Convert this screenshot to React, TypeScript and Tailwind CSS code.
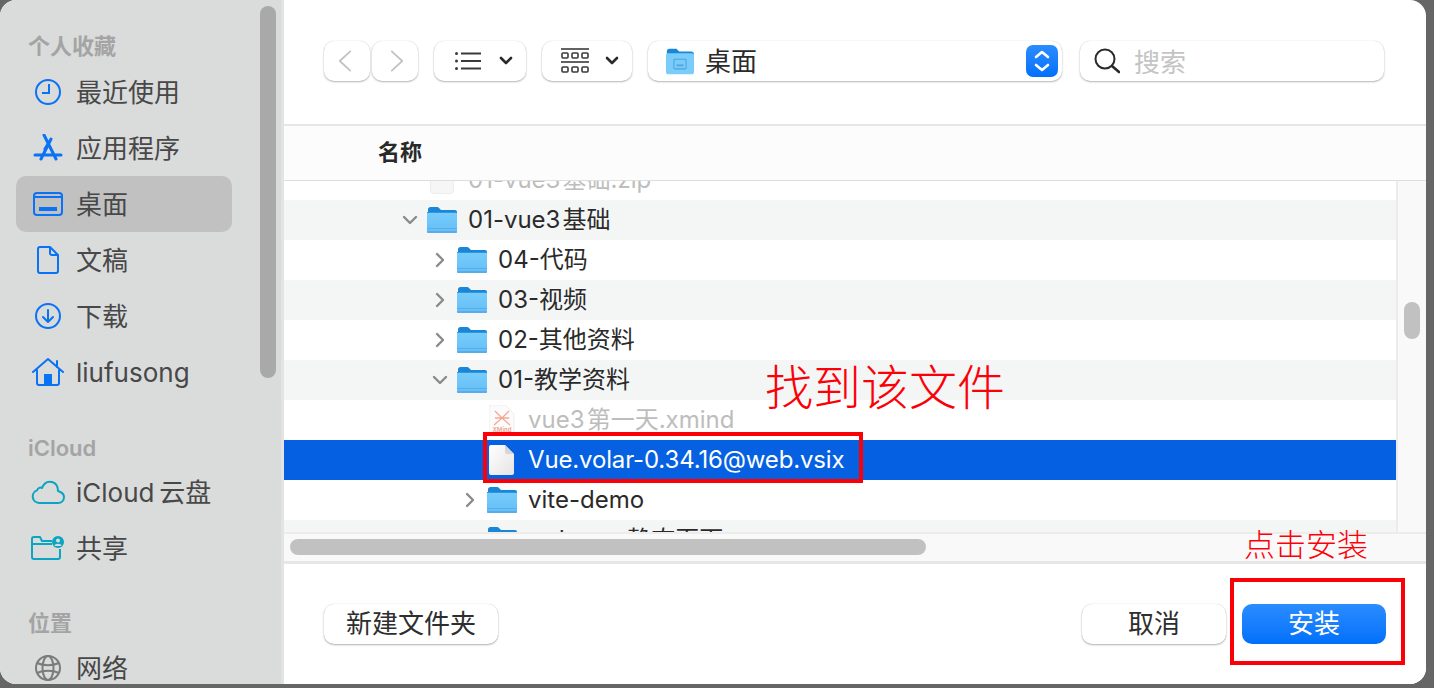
import React from 'react';

const uiFont = 'font-["Inter","Noto_Sans_CJK_SC",sans-serif]';

function FolderIcon({ id }: { id: string }) {
  return (
    <svg width="32" height="28" viewBox="0 0 32 28" className="shrink-0">
      <defs>
        <linearGradient id={id} x1="0" y1="0" x2="0" y2="1">
          <stop offset="0" stopColor="#79cdfb" />
          <stop offset="1" stopColor="#63bdf7" />
        </linearGradient>
      </defs>
      <path d="M2 3.500C2 2 3 1 4.500 1h6.500c1 0 1.500.5 2.500 1.500l1.500 1.500h14c1.200 0 2 .8 2 2v2H2z" fill="#1a86d8" />
      <rect x="1" y="6" width="30" height="21" rx="2" fill={`url(#${id})`} />
      <rect x="1" y="6" width="30" height="1" fill="#2c97e4" />
      <rect x="1" y="22" width="30" height="1" fill="#56aeea" />
      <rect x="1" y="25" width="30" height="2" rx="1" fill="#58ade6" />
    </svg>
  );
}

function Chevron({ open }: { open: boolean }) {
  return (
    <svg width="18" height="18" viewBox="0 0 18 18" fill="none" stroke="#8a8a8a" strokeWidth="2.400" strokeLinecap="round" strokeLinejoin="round" className="shrink-0">
      {open ? <path d="M3 6l6 6 6-6" /> : <path d="M6 3l6 6-6 6" />}
    </svg>
  );
}

function DocIcon() {
  return (
    <svg width="26" height="30" viewBox="0 0 26 30" className="shrink-0">
      <defs>
        <linearGradient id="doc" x1="0" y1="0" x2="1" y2="1">
          <stop offset="0" stopColor="#ffffff" />
          <stop offset="1" stopColor="#e4e4e4" />
        </linearGradient>
      </defs>
      <path d="M2 0h14l9 9v19a2 2 0 0 1-2 2H2a2 2 0 0 1-2-2V2a2 2 0 0 1 2-2z" fill="url(#doc)" />
      <path d="M16 0l9 9h-7a2 2 0 0 1-2-2z" fill="#d6d6d6" />
    </svg>
  );
}

function XmindIcon() {
  return (
    <svg width="26" height="30" viewBox="0 0 26 30" className="shrink-0">
      <path d="M2 0h14l9 9v19a2 2 0 0 1-2 2H2a2 2 0 0 1-2-2V2a2 2 0 0 1 2-2z" fill="#fbfbfb" stroke="#efefef" />
      <path d="M6 6l7 7 7-7M5 20l8-7 8 7M6 13h14" fill="none" stroke="#f5a793" strokeWidth="1.300" />
      <text x="13" y="27" textAnchor="middle" fontSize="6" fontWeight="700" fill="#f5a793">XMind</text>
    </svg>
  );
}

type Row = { indent: number; chevron?: 'open' | 'closed'; icon: 'folder' | 'doc' | 'xmind' | 'zip'; name: string; stripe?: boolean; selected?: boolean; dim?: boolean };

const rows: Row[] = [
  { indent: 142, icon: 'zip', name: '01-vue3\u200a基础.zip', dim: true },
  { indent: 142, chevron: 'open', icon: 'folder', name: '01-vue3\u200a基础', stripe: true },
  { indent: 172, chevron: 'closed', icon: 'folder', name: '04-代码' },
  { indent: 172, chevron: 'closed', icon: 'folder', name: '03-视频', stripe: true },
  { indent: 172, chevron: 'closed', icon: 'folder', name: '02-其他资料' },
  { indent: 172, chevron: 'open', icon: 'folder', name: '01-教学资料', stripe: true },
  { indent: 202, icon: 'xmind', name: 'vue3\u200a第一天.xmind', dim: true },
  { indent: 202, icon: 'doc', name: 'Vue.volar-0.34.16@web.vsix', selected: true },
  { indent: 202, chevron: 'closed', icon: 'folder', name: 'vite-demo' },
  { indent: 202, chevron: 'closed', icon: 'folder', name: 'todo-vs-静态页面', stripe: true },
];

function FileRow({ row, idx }: { row: Row; idx: number }) {
  const bg = row.selected ? 'bg-[#0561e2]' : row.stripe ? 'bg-[#f4f5f5]' : 'bg-white';
  const color = row.selected ? 'text-white tracking-[-0.15px]' : row.dim ? 'text-[#bdbdbd]' : 'text-[#2a2a2a]';
  return (
    <div className={`h-10 shrink-0 flex items-center relative ${bg}`}>
      <div className="flex items-center" style={{ paddingLeft: row.indent - 30 }}>
        <div className="w-[30px] flex justify-start pl-[5px]">
          {row.chevron && <Chevron open={row.chevron === 'open'} />}
        </div>
        <div className="w-[32px] flex justify-center">
          {row.icon === 'folder' && <FolderIcon id={`folder-${idx}`} />}
          {row.icon === 'doc' && <DocIcon />}
          {row.icon === 'xmind' && <XmindIcon />}
          {row.icon === 'zip' && <div className="w-6 h-7 bg-[#f6f6f6] border border-[#ececec] rounded-sm" />}
        </div>
        <span className={`ml-[10px] text-[24px] leading-10 whitespace-nowrap ${color}`}>{row.name}</span>
      </div>
    </div>
  );
}

function SideItem({ icon, label, active }: { icon: React.ReactNode; label: string; active?: boolean }) {
  return (
    <div className={`h-14 mx-4 w-[216px] flex items-center rounded-[10px] ${active ? 'bg-[#c1c1c1]' : ''}`}>
      <div className="w-[60px] flex justify-center pl-[3px]">{icon}</div>
      <span className="text-[26px] text-[#484848] whitespace-nowrap">{label}</span>
    </div>
  );
}

const blue = '#0a72f5';
const teal = '#0aa5c0';

function Sidebar() {
  return (
    <div className="w-[284px] shrink-0 bg-[#dadbdb] border-r-[3px] border-[#e3e3e3] relative overflow-hidden pt-[26px]">
      <div className="text-[22px] font-semibold text-[#a4a4a4] pl-7 h-[38px] leading-10">个人收藏</div>
      <SideItem label="最近使用" icon={
        <svg width="28" height="28" viewBox="0 0 28 28" fill="none" stroke={blue} strokeWidth="2"><circle cx="14" cy="14" r="12" /><path d="M15 6v9H8" /></svg>
      } />
      <SideItem label="应用程序" icon={
        <svg width="30" height="28" viewBox="0 0 30 28" fill="none" stroke={blue} strokeWidth="3" strokeLinecap="round"><path d="M11 1l12 24M18 5L8 25M2 21h26" /><path d="M15 10l-3 5" /></svg>
      } />
      <SideItem active label="桌面" icon={
        <svg width="30" height="24" viewBox="0 0 30 24" fill="none" stroke={blue} strokeWidth="2"><rect x="1" y="1" width="28" height="22" rx="3" /><path d="M1 5h28" /><rect x="6" y="15" width="18" height="4" fill={blue} stroke="none" /></svg>
      } />
      <SideItem label="文稿" icon={
        <svg width="22" height="28" viewBox="0 0 22 28" fill="none" stroke={blue} strokeWidth="2" strokeLinejoin="round"><path d="M3 1h10l8 8v16a2 2 0 0 1-2 2H3a2 2 0 0 1-2-2V3a2 2 0 0 1 2-2z" /><path d="M13 1v6a2 2 0 0 0 2 2h6" /></svg>
      } />
      <SideItem label="下载" icon={
        <svg width="28" height="28" viewBox="0 0 28 28" fill="none" stroke={blue} strokeWidth="2" strokeLinecap="round" strokeLinejoin="round"><circle cx="14" cy="14" r="12" /><path d="M14 8v12M9 15l5 5 5-5" /></svg>
      } />
      <SideItem label="liufusong" icon={
        <svg width="32" height="28" viewBox="0 0 32 28" fill="none" stroke={blue} strokeWidth="2" strokeLinejoin="round" strokeLinecap="round"><path d="M1 14L16 1l15 13" /><path d="M25 3v6" /><path d="M5 12v13a2 2 0 0 0 2 2h18a2 2 0 0 0 2-2V12" /><rect x="12" y="16" width="8" height="11" fill={blue} stroke="none" /></svg>
      } />
      <div className="text-[22px] font-semibold text-[#a4a4a4] pl-7 h-[34px] leading-9 mt-[30px]">iCloud</div>
      <SideItem label={'iCloud\u2009云盘'} icon={
        <svg width="34" height="24" viewBox="0 0 34 24" fill="none" stroke={teal} strokeWidth="2" strokeLinejoin="round"><path d="M8 23a6.500 6.500 0 0 1-2-12.600C7 8 9 7 11 8c2-5 6-7 10-6 4 1 6 5 6 9 3 1 6 3 6 6 0 3.500-2.500 6-6 6z" /></svg>
      } />
      <SideItem label="共享" icon={
        <svg width="34" height="24" viewBox="0 0 34 24" fill="none" stroke={teal} strokeWidth="2" strokeLinejoin="round"><path d="M21 5H11L9 1H3a2 2 0 0 0-2 2v18a2 2 0 0 0 2 2h24a2 2 0 0 0 2-2V13" /><path d="M1 8h20" /><circle cx="27" cy="6" r="6" fill={teal} stroke="none" /><circle cx="27" cy="4.500" r="2" fill="#dadbdb" stroke="none" /><path d="M23.500 10c0-3 7-3 7 0z" fill="#dadbdb" stroke="none" /></svg>
      } />
      <div className="text-[22px] font-semibold text-[#a4a4a4] pl-7 h-[35px] leading-9 mt-[29px]">位置</div>
      <SideItem label="网络" icon={
        <svg width="28" height="28" viewBox="0 0 28 28" fill="none" stroke="#7b7b7b" strokeWidth="2"><circle cx="14" cy="14" r="12" /><ellipse cx="14" cy="14" rx="5.500" ry="12" /><path d="M3 9c6 3 16 3 22 0M3 19c6-3 16-3 22 0" /></svg>
      } />
      {/* sidebar scrollbar */}
      <div className="absolute left-[260px] top-[6px] w-4 h-[372px] rounded-lg bg-[#a9a9a9]" />
    </div>
  );
}

function Toolbar() {
  const btn = 'h-10 bg-white rounded-[10px] shadow-[0_1px_2px_rgba(0,0,0,0.28),0_0_1px_rgba(0,0,0,0.2)] flex items-center';
  return (
    <div className="h-[124px] shrink-0 flex items-center pl-10 pb-[2px]">
      <div className={`${btn} w-[46px] justify-center pr-1`}>
        <svg width="14" height="26" viewBox="0 0 16 26" fill="none" stroke="#c2c2c2" strokeWidth="2" strokeLinecap="round" strokeLinejoin="round"><path d="M14 2L2 13l12 11" /></svg>
      </div>
      <div className={`${btn} w-[46px] justify-center ml-[2px] pl-1`}>
        <svg width="14" height="26" viewBox="0 0 16 26" fill="none" stroke="#c2c2c2" strokeWidth="2" strokeLinecap="round" strokeLinejoin="round"><path d="M2 2l12 11L2 24" /></svg>
      </div>
      <div className={`${btn} w-[92px] ml-4 pl-[21px] gap-[18px]`}>
        <svg width="26" height="18" viewBox="0 0 26 18" fill="#3a3a3a"><circle cx="1.500" cy="1.500" r="1.500" /><circle cx="1.500" cy="9" r="1.500" /><circle cx="1.500" cy="16.500" r="1.500" /><rect x="6" y="0.500" width="20" height="2" /><rect x="6" y="8" width="20" height="2" /><rect x="6" y="15.500" width="20" height="2" /></svg>
        <svg width="14" height="10" viewBox="0 0 14 10" fill="none" stroke="#2a2a2a" strokeWidth="2.600" strokeLinecap="round" strokeLinejoin="round"><path d="M2 2l5 5 5-5" /></svg>
      </div>
      <div className={`${btn} w-[90px] ml-4 pl-[19px] gap-4`}>
        <svg width="28" height="26" viewBox="0 0 28 26" fill="none" stroke="#3a3a3a" strokeWidth="1.600"><path d="M0 1h28" /><rect x="1" y="5" width="6" height="5" rx="1" /><rect x="11" y="5" width="6" height="5" rx="1" /><rect x="21" y="5" width="6" height="5" rx="1" /><path d="M0 14h28" /><rect x="1" y="19" width="6" height="5" rx="1" /><rect x="11" y="19" width="6" height="5" rx="1" /><rect x="21" y="19" width="6" height="5" rx="1" /></svg>
        <svg width="14" height="10" viewBox="0 0 14 10" fill="none" stroke="#2a2a2a" strokeWidth="2.600" strokeLinecap="round" strokeLinejoin="round"><path d="M2 2l5 5 5-5" /></svg>
      </div>
      <div className={`${btn} w-[414px] ml-4 pl-[18px] pr-1`}>
        <svg width="28" height="28" viewBox="0 0 32 32" className="shrink-0">
          <path d="M1 5c0-2 1-3 3-3h8l3 3h14c1.500 0 3 1 3 3v2H1z" fill="#1a86d8" />
          <rect x="0" y="7" width="32" height="24" rx="2" fill="#7acdfb" />
          <rect x="9" y="14" width="14" height="11" rx="1" fill="none" stroke="#4ba3dc" strokeWidth="1.200" />
          <rect x="12" y="20" width="8" height="2" fill="#4ba3dc" />
        </svg>
        <span className="ml-[11px] text-[26px] text-[#2a2a2a] flex-1">桌面</span>
        <div className="w-8 h-8 rounded-[7px] bg-gradient-to-b from-[#2a8cff] to-[#0070fb] flex items-center justify-center">
          <svg width="18" height="26" viewBox="0 0 18 26" fill="none" stroke="white" strokeWidth="2.600" strokeLinecap="round" strokeLinejoin="round"><path d="M3 9l6-5 6 5M3 17l6 5 6-5" /></svg>
        </div>
      </div>
      <div className={`${btn} w-[304px] ml-[18px] pl-[14px]`}>
        <svg width="26" height="26" viewBox="0 0 26 26" fill="none" stroke="#2a2a2a" strokeWidth="2" strokeLinecap="round"><circle cx="11" cy="11" r="9.500" /><path d="M18 18l7 6" strokeWidth="2.600" /></svg>
        <span className="ml-[14px] text-[26px] text-[#c4c4c4] pt-[2px]">搜索</span>
      </div>
    </div>
  );
}

function FileList() {
  return (
    <div className="flex-1 min-h-0 flex flex-col bg-[#f9f9f9]">
      <div className="h-[351px] flex">
        <div className="w-[1112px] bg-white overflow-hidden flex flex-col">
          <div className="-mt-[21px] flex flex-col">
            {rows.map((r, i) => (
              <FileRow key={r.name} row={r} idx={i} />
            ))}
          </div>
        </div>
        <div className="flex-1 border-l-2 border-[#ececec] relative">
          <div className="absolute left-[6px] top-[121px] w-4 h-[37px] rounded-lg bg-[#c1c1c1]" />
        </div>
      </div>
      <div className="flex-1 border-t-2 border-[#ececec] pl-[6px] pt-[5px] border-b-[3px] border-b-[#e6e6e6]">
        <div className="w-[636px] h-4 rounded-lg bg-[#c1c1c1]" />
      </div>
    </div>
  );
}

function Footer() {
  const btn = 'h-10 rounded-[10px] flex items-center justify-center text-[26px] pb-[2px]';
  const plain = 'bg-white text-[#2e2e2e] shadow-[0_1px_2px_rgba(0,0,0,0.3),0_0_1px_rgba(0,0,0,0.2)]';
  return (
    <div className="h-[120px] shrink-0 bg-white flex items-center pl-10 pr-10">
      <div className={`${btn} ${plain} w-[174px]`}>新建文件夹</div>
      <div className={`${btn} ${plain} w-36 ml-auto`}>取消</div>
      <div className={`${btn} w-36 ml-4 text-white bg-gradient-to-b from-[#2a8cff] to-[#0070fb]`}>安装</div>
    </div>
  );
}

export default function App() {
  return (
    <div className={`w-[1434px] h-[688px] overflow-hidden relative bg-[#666666] ${uiFont}`}>
      <div className="w-[1426px] h-[684px] rounded-[16px] overflow-hidden flex bg-white">
        <Sidebar />
        <div className="flex-1 min-w-0 flex flex-col">
          <Toolbar />
          <div className="h-[57px] shrink-0 border-t-2 border-[#e6e6e6] border-b border-b-[#dedede] bg-[#fcfcfc] flex items-center pl-[94px]">
            <span className="text-[22px] font-semibold text-[#2a2a2a] pb-[2px]">名称</span>
          </div>
          <FileList />
          <Footer />
        </div>
      </div>
      {/* red annotations on top of the screenshot */}
      <div className="absolute left-[765px] top-[358px] text-[48px] leading-[60px] font-light text-[#fb0007] whitespace-nowrap">找到该文件</div>
      <div className="absolute left-[483px] top-[432px] w-[380px] h-[51px] border-4 border-[#fb0007]" />
      <div className="absolute left-[1244px] top-[525px] text-[31px] leading-10 font-light text-[#fb0007] whitespace-nowrap">点击安装</div>
      <div className="absolute left-[1230px] top-[578px] w-[175px] h-[87px] border-4 border-[#fb0007]" />
    </div>
  );
}
